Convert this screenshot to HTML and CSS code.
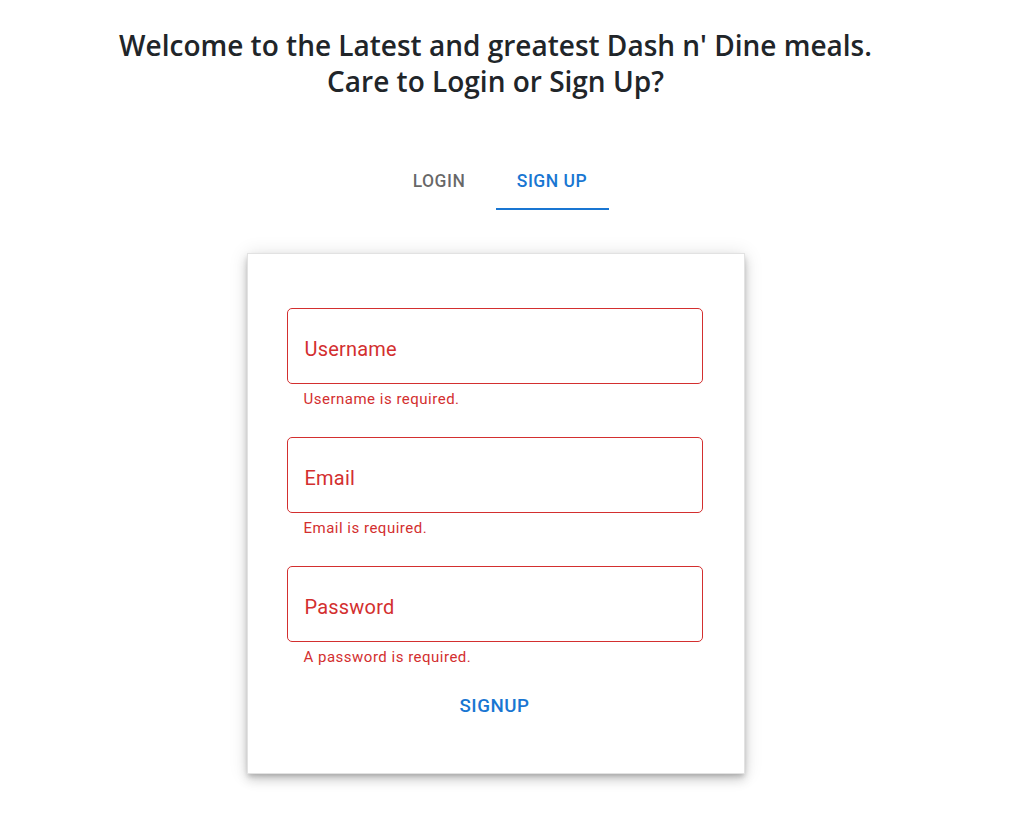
FILE: index.html
```html
<!DOCTYPE html>
<html lang="en">
<head>
<meta charset="utf-8">
<title>Dash n' Dine</title>
<link rel="stylesheet" href="styles.css">
</head>
<body>
<div class="page">
  <h1 class="title">Welcome to the Latest and greatest Dash n' Dine meals.<br>Care to Login or Sign Up?</h1>
  <div class="tabs">
    <button class="tab">Login</button>
    <button class="tab active">Sign Up</button>
  </div>
  <div class="card">
    <form class="form">
      <div class="field">
        <div class="input"><span class="label">Username</span></div>
        <p class="helper">Username is required.</p>
      </div>
      <div class="field">
        <div class="input"><span class="label">Email</span></div>
        <p class="helper">Email is required.</p>
      </div>
      <div class="field">
        <div class="input"><span class="label">Password</span></div>
        <p class="helper">A password is required.</p>
      </div>
      <button type="button" class="submit">Signup</button>
    </form>
  </div>
</div>
</body>
</html>
```

FILE: styles.css
```css
* { box-sizing: border-box; }
html, body { margin: 0; padding: 0; background: #fff; }
body { font-family: Roboto, "Liberation Sans", sans-serif; }

.page {
  width: 991px;
  display: flex;
  flex-direction: column;
  align-items: center;
  padding-top: 27px;
  padding-bottom: 30px;
}

.title {
  margin: 0;
  font-family: "Open Sans", "Noto Sans", sans-serif;
  font-weight: 600;
  font-size: 28px;
  line-height: 36px;
  color: #212529;
  text-align: center;
}

.tabs {
  display: flex;
  margin-top: 51px;
  height: 60px;
}
.tab {
  width: 113px;
  height: 60px;
  border: 0;
  background: none;
  padding: 0;
  font-family: Roboto, sans-serif;
  font-weight: 500;
  font-size: 17.5px;
  letter-spacing: 0.5px;
  text-transform: uppercase;
  color: rgba(0,0,0,0.6);
  border-bottom: 2.5px solid transparent;
  padding-top: 4px;
}
.tab.active {
  color: #1976d2;
  border-bottom-color: #1976d2;
}

.card {
  margin-top: 43px;
  width: 498px;
  padding: 54px 41px 45px 39px;
  background: #fff;
  border: 1px solid #e2e2e2;
  box-shadow: 0 3px 5px -1px rgba(0,0,0,0.2), 0 6px 10px 0 rgba(0,0,0,0.14), 0 1px 18px 0 rgba(0,0,0,0.12);
}

.form {
  display: flex;
  flex-direction: column;
  gap: 25px;
}

.field { display: flex; flex-direction: column; }

.input {
  height: 76px;
  border: 1px solid #d32f2f;
  border-radius: 5px;
  display: flex;
  align-items: center;
  padding: 6px 17px 0 17px;
}
.label {
  font-size: 20px;
  color: #d32f2f;
  letter-spacing: 0.2px;
}

.helper {
  margin: 3px 0 0 17px;
  font-size: 15px;
  line-height: 25px;
  letter-spacing: 0.5px;
  color: #d32f2f;
}

.submit {
  align-self: center;
  margin-top: -12px;
  height: 45px;
  padding: 0 20px;
  border: 0;
  background: none;
  font-family: Roboto, sans-serif;
  font-weight: 500;
  font-size: 18.75px;
  letter-spacing: 0.5px;
  text-transform: uppercase;
  color: #1976d2;
}
```
